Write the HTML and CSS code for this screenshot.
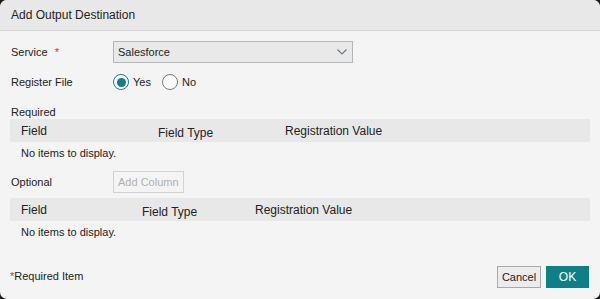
FILE: index.html
```html
<!DOCTYPE html>
<html lang="en">
<head>
    <meta charset="UTF-8">
    <title>Add Output Destination</title>
    <link rel="stylesheet" href="styles.css">
</head>
<body>
<div class="dialog">
    <div class="dialog-header">Add Output Destination</div>
    <div class="dialog-body">
        <div class="form-row service-row">
            <label class="form-label">Service <span class="req">*</span></label>
            <div class="select-box">
                <span>Salesforce</span>
                <svg class="chevron" width="10" height="6" viewBox="0 0 10 6"><path d="M0.5 0.5 L5 5 L9.5 0.5" fill="none" stroke="#6a7a88" stroke-width="1.2"/></svg>
            </div>
        </div>
        <div class="form-row register-row">
            <label class="form-label">Register File</label>
            <div class="radio-group">
                <span class="radio checked"></span><span class="radio-text">Yes</span>
                <span class="radio"></span><span class="radio-text">No</span>
            </div>
        </div>

        <div class="section-label required-label">Required</div>
        <div class="grid-header">
            <span class="col-field">Field</span>
            <span class="col-type">Field Type</span>
            <span class="col-value">Registration Value</span>
        </div>
        <div class="empty-row">No items to display.</div>

        <div class="form-row optional-row">
            <span class="form-label">Optional</span>
            <button class="add-column" disabled>Add Column</button>
        </div>
        <div class="grid-header grid-optional">
            <span class="col-field">Field</span>
            <span class="col-type">Field Type</span>
            <span class="col-value">Registration Value</span>
        </div>
        <div class="empty-row">No items to display.</div>

        <div class="dialog-footer">
            <span class="footnote"><span class="req">*</span>Required Item</span>
            <div class="footer-buttons">
                <button class="btn-cancel">Cancel</button>
                <button class="btn-ok">OK</button>
            </div>
        </div>
    </div>
</div>
</body>
</html>
```

FILE: styles.css
```css
body {
    margin: 0;
    background-color: #1a1a1a;
    font-family: "Liberation Sans", Arial, sans-serif;
    font-size: 11px;
    line-height: 14px;
    color: #222;
}

.dialog {
    width: 600px;
    height: 299px;
    background: #f4f4f4;
    border-radius: 7px;
    overflow: hidden;
    display: flex;
    flex-direction: column;
}

.dialog-header {
    height: 30px;
    line-height: 31px;
    background: #e8e8e8;
    border-bottom: 1px solid #d4d4d4;
    padding-left: 11px;
    font-size: 12px;
    color: #222;
}

.dialog-body {
    flex: 1;
    padding: 0 11px 0 11px;
    display: flex;
    flex-direction: column;
}

.form-row {
    display: flex;
    align-items: center;
}

.form-label {
    width: 102px;
}

.req {
    color: #c0392b;
    margin-left: 4px;
}

.footnote .req {
    margin-left: 0;
}

.service-row {
    margin-top: 10px;
}

.select-box {
    width: 230px;
    height: 20px;
    border: 1px solid #b5b5b5;
    background: #e9e9e9;
    display: flex;
    align-items: center;
    justify-content: space-between;
    padding: 0 4px 0 4px;
    box-sizing: content-box;
}

.chevron {
    margin-right: 1px;
}

.register-row {
    margin-top: 8px;
    height: 22px;
}

.radio-group {
    display: flex;
    align-items: center;
}

.radio {
    width: 14px;
    height: 14px;
    border: 1.5px solid #777;
    border-radius: 50%;
    box-sizing: content-box;
    display: flex;
    align-items: center;
    justify-content: center;
    background: #fff;
}

.radio.checked {
    border-color: #0f7f86;
}

.radio.checked::after {
    content: "";
    width: 9px;
    height: 9px;
    border-radius: 50%;
    background: #0f7f86;
}

.radio-text {
    margin: 0 11px 0 4px;
}

.required-label {
    margin-top: 12px;
}

.grid-header {
    margin: 0 -1px 0 -1px;
    height: 23px;
    background: #e8e8e8;
    display: flex;
    align-items: center;
    font-size: 12px;
}

.col-field {
    padding-left: 11px;
    width: 137px;
}

.col-type {
    width: 127px;
    padding-top: 5px;
}

.grid-optional .col-field {
    width: 121px;
}

.grid-optional .col-type {
    width: 113px;
}

.empty-row {
    padding-left: 10px;
    height: 22px;
    line-height: 22px;
}

.optional-row {
    margin-top: 7px;
}

.add-column {
    font-family: inherit;
    font-size: 11px;
    color: #b0b0b0;
    background: #f4f4f4;
    border: 1px solid #d2d2d2;
    height: 22px;
    padding: 0 4px;
}

.grid-optional {
    margin-top: 5px;
}

.dialog-footer {
    margin-top: auto;
    margin-bottom: 11px;
    display: flex;
    align-items: center;
    justify-content: space-between;
}

.footnote {
    margin: 0 0 3px -1px;
}

.footer-buttons {
    display: flex;
    gap: 5px;
}

.btn-cancel, .btn-ok {
    font-family: inherit;
    font-size: 11px;
    height: 22px;
    padding: 0;
}

.btn-cancel {
    width: 44px;
    background: #ececec;
    border: 1px solid #a8a8a8;
    color: #222;
}

.btn-ok {
    width: 43px;
    background: #0f7f86;
    border: 1px solid #0f7f86;
    color: #fff;
    font-size: 12px;
}
```
